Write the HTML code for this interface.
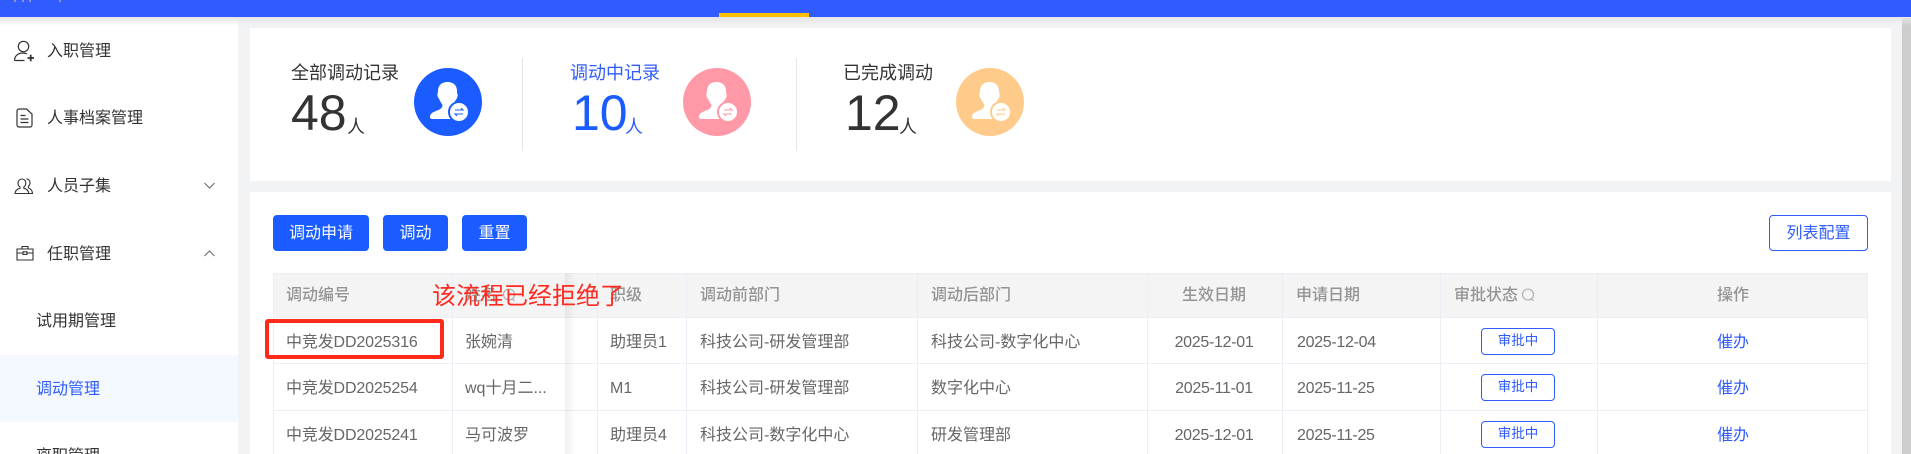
<!DOCTYPE html>
<html lang="zh-CN">
<head>
<meta charset="utf-8">
<title>调动管理</title>
<style>
html,body{margin:0;padding:0;width:1911px;height:454px;overflow:hidden;background:#f2f3f5;}
#w{position:relative;width:1911px;height:454px;overflow:hidden;background:#f2f3f5;font-family:"Liberation Sans","Noto Sans CJK SC",sans-serif;color:#333;}
.a{position:absolute;}
.t{position:absolute;white-space:nowrap;font-size:16px;line-height:24px;height:24px;}
.c{transform:translateX(-50%);}
.m{color:#333;}
.h{color:#949494;font-weight:500;}
.b{color:#666;}
.d{letter-spacing:-.3px;}
.e{letter-spacing:-.15px;}
.btn{position:absolute;top:215px;height:36px;line-height:37px;background:#1a5cff;color:#fff;text-align:center;font-size:16px;border-radius:4px;}
.tag{position:absolute;left:1481px;width:72px;height:25px;line-height:24px;border:1px solid #2f5bff;border-radius:4px;color:#2f5bff;font-size:13.5px;text-align:center;background:#fff;}
.hl{position:absolute;left:273px;width:1595px;height:1px;background:#eceef5;}
.vl{position:absolute;top:273px;height:181px;width:1px;background:#eceef5;}
.num{position:absolute;font-size:50px;line-height:56px;height:56px;white-space:nowrap;}
.ren{position:absolute;font-size:18px;line-height:24px;white-space:nowrap;}
svg{position:absolute;display:block;}
</style>
</head>
<body>
<div id="w">
<!-- main cards -->
<div class="a" style="left:250px;top:28px;width:1641px;height:153px;background:#fff;"></div>
<div class="a" style="left:250px;top:192px;width:1641px;height:262px;background:#fff;"></div>
<!-- scrollbar -->
<div class="a" style="left:1902px;top:18px;width:9px;height:436px;background:#cdcdcd;"></div>
<!-- sidebar -->
<div class="a" style="left:0;top:0;width:238px;height:454px;background:#fff;"></div>
<div class="a" style="left:0;top:355px;width:238px;height:67px;background:#f4f8ff;"></div>
<!-- top bar -->
<div class="a" style="left:0;top:17px;width:1911px;height:9px;background:linear-gradient(#e6e6e8,rgba(240,240,242,0));"></div>
<div class="a" style="left:0;top:0;width:1911px;height:17px;background:#2f5bff;"></div>
<div class="a" style="left:719px;top:13px;width:90px;height:4px;background:#ffc000;"></div>
<div class="a" style="left:14px;top:0;width:2px;height:2px;background:#8f93c9;"></div>
<div class="a" style="left:22px;top:0;width:2px;height:2px;background:#8f93c9;"></div>
<div class="a" style="left:29px;top:0;width:2px;height:2px;background:#8f93c9;"></div>
<div class="a" style="left:59px;top:0;width:2px;height:2px;background:#8f93c9;"></div>

<!-- sidebar icons -->
<svg style="left:13px;top:40px" width="22" height="22" viewBox="0 0 22 22" fill="none" stroke="#333" stroke-width="1.200">
<circle cx="10.500" cy="6.500" r="5.200"/><path d="M1.500 20.500c0-4.500 3.500-7.500 8.500-7.500 1.500 0 2.800.3 4 .9M1.500 20.500h10"/><path d="M14.500 18h6.500M17.700 14.800v6.400" stroke-width="1.800"/>
</svg>
<svg style="left:16px;top:108px" width="17" height="20" viewBox="0 0 17 20" fill="none" stroke="#333" stroke-width="1.200">
<path d="M3 1h7.500L16 6v11a2 2 0 0 1-2 2H3a2 2 0 0 1-2-2V3a2 2 0 0 1 2-2z"/><path d="M4.500 7.500h5M4.500 11h8M4.500 14.500h8"/>
</svg>
<svg style="left:14px;top:177px" width="20" height="18" viewBox="0 0 20 18" fill="none" stroke="#333" stroke-width="1.100">
<path d="M8 2c2.300 0 3.800 1.800 3.800 4 0 1.800-.8 3.200-2 4v1.200c2.800.8 4.700 2.500 5 5.300H1c.3-2.800 2.200-4.500 5-5.300V10c-1.200-.8-2-2.200-2-4 0-2.200 1.700-4 4-4z"/><path d="M12.500 1.800c2 .2 3.500 1.800 3.500 3.900 0 1.500-.6 2.700-1.600 3.500v1.700c2.500.9 3.900 2.700 4.100 5.600h-3.300"/>
</svg>
<svg style="left:16px;top:245px" width="18" height="16" viewBox="0 0 18 16" fill="none" stroke="#333" stroke-width="1.100">
<path d="M1 4h16v11H1z"/><path d="M6 4V1.500h6V4"/><path d="M1 8h6M11 8h6"/><path d="M7 6.800h4v2.600H7z"/>
</svg>
<svg style="left:204px;top:182px" width="11" height="7" viewBox="0 0 11 7" fill="none" stroke="#666" stroke-width="1"><path d="M.5 1l5 5 5-5"/></svg>
<svg style="left:204px;top:250px" width="11" height="7" viewBox="0 0 11 7" fill="none" stroke="#666" stroke-width="1"><path d="M.5 6l5-5 5 5"/></svg>

<!-- sidebar text -->
<div class="t m" style="left:47px;top:40px;">入职管理</div>
<div class="t m" style="left:47px;top:107px;">人事档案管理</div>
<div class="t m" style="left:47px;top:175px;">人员子集</div>
<div class="t m" style="left:47px;top:243px;">任职管理</div>
<div class="t m" style="left:36px;top:310px;">试用期管理</div>
<div class="t" style="left:36px;top:378px;color:#2f5bff;">调动管理</div>
<div class="t m" style="left:36px;top:445px;">离职管理</div>

<!-- stats -->
<div class="t" style="left:291px;top:61px;font-size:18px;">全部调动记录</div>
<div class="num" style="left:291px;top:85px;color:#333;">48</div>
<div class="ren" style="left:347px;top:115px;">人</div>
<svg style="left:414px;top:68px" width="68" height="68" viewBox="0 0 68 68">
<circle cx="34" cy="34" r="34" fill="#1a5cff"/>
<path fill="#fff" d="M33.500 14C27 14 24 18 24 23C24 25 23 26 23.500 28C24 30 25.500 31 26 33L28.500 37C28.500 40 26 41.500 22 43C18 44.500 16 46 16 49C16 50.500 17 51 18 51H44V38H39L41 33C43 30.500 44 28.500 43.500 26C43 25 43 24 43 23C43 18 40 14 33.500 14Z"/>
<circle cx="45" cy="44" r="11" fill="#1a5cff"/><circle cx="45" cy="44" r="9" fill="#fff"/>
<path fill="none" stroke="#1a5cff" stroke-width="1.100" d="M41 42h8l-2-1.800M49 46h-8l2 1.800"/>
</svg>

<div class="a" style="left:522px;top:58px;width:1px;height:93px;background:#e6e6e6;"></div>
<div class="t" style="left:570px;top:61px;font-size:18px;color:#2f5bff;">调动中记录</div>
<div class="num" style="left:572px;top:85px;color:#1a5cff;">10</div>
<div class="ren" style="left:625px;top:115px;color:#2f5bff;">人</div>
<svg style="left:683px;top:68px" width="68" height="68" viewBox="0 0 68 68">
<circle cx="34" cy="34" r="34" fill="#ff99a8"/>
<path fill="#fff" d="M33.500 14C27 14 24 18 24 23C24 25 23 26 23.500 28C24 30 25.500 31 26 33L28.500 37C28.500 40 26 41.500 22 43C18 44.500 16 46 16 49C16 50.500 17 51 18 51H44V38H39L41 33C43 30.500 44 28.500 43.500 26C43 25 43 24 43 23C43 18 40 14 33.500 14Z"/>
<circle cx="45" cy="44" r="11" fill="#ff99a8"/><circle cx="45" cy="44" r="9" fill="#fff"/>
<path fill="none" stroke="#ff99a8" stroke-width="1.100" d="M41 42h8l-2-1.800M49 46h-8l2 1.800"/>
</svg>

<div class="a" style="left:796px;top:58px;width:1px;height:93px;background:#e6e6e6;"></div>
<div class="t" style="left:843px;top:61px;font-size:18px;">已完成调动</div>
<div class="num" style="left:845px;top:85px;color:#333;">12</div>
<div class="ren" style="left:899px;top:115px;">人</div>
<svg style="left:956px;top:68px" width="68" height="68" viewBox="0 0 68 68">
<circle cx="34" cy="34" r="34" fill="#ffcb8a"/>
<path fill="#fff" d="M33.500 14C27 14 24 18 24 23C24 25 23 26 23.500 28C24 30 25.500 31 26 33L28.500 37C28.500 40 26 41.500 22 43C18 44.500 16 46 16 49C16 50.500 17 51 18 51H44V38H39L41 33C43 30.500 44 28.500 43.500 26C43 25 43 24 43 23C43 18 40 14 33.500 14Z"/>
<circle cx="45" cy="44" r="11" fill="#ffcb8a"/><circle cx="45" cy="44" r="9" fill="#fff"/>
<path fill="none" stroke="#ffcb8a" stroke-width="1.100" d="M41 42h8l-2-1.800M49 46h-8l2 1.800"/>
</svg>

<!-- buttons -->
<div class="btn" style="left:273px;width:96px;">调动申请</div>
<div class="btn" style="left:383px;width:65px;">调动</div>
<div class="btn" style="left:462px;width:65px;">重置</div>
<div class="a" style="left:1769px;top:215px;width:97px;height:34px;line-height:35px;border:1px solid #2f5bff;border-radius:4px;color:#2f5bff;text-align:center;font-size:16px;">列表配置</div>

<!-- table -->
<div class="a" style="left:273px;top:273px;width:1595px;height:44px;background:#f4f4f5;"></div>
<div class="hl" style="top:273px;"></div>
<div class="hl" style="top:317px;"></div>
<div class="hl" style="top:363px;"></div>
<div class="hl" style="top:410px;"></div>
<div class="vl" style="left:273px;"></div>
<div class="vl" style="left:452px;"></div>
<div class="vl" style="left:597px;"></div>
<div class="vl" style="left:686px;"></div>
<div class="vl" style="left:917px;"></div>
<div class="vl" style="left:1147px;"></div>
<div class="vl" style="left:1282px;"></div>
<div class="vl" style="left:1440px;"></div>
<div class="vl" style="left:1597px;"></div>
<div class="vl" style="left:1867px;"></div>
<!-- fixed column shadow -->
<div class="a" style="left:565px;top:273px;width:11px;height:181px;background:linear-gradient(to right,rgba(0,0,0,.06),rgba(0,0,0,0));"></div>

<!-- header text -->
<div class="t h" style="left:286px;top:284px;">调动编号</div>
<div class="t h" style="left:465px;top:284px;">姓名</div>
<svg style="left:502px;top:288px" width="15" height="14" viewBox="0 0 15 14" fill="none" stroke="#aaa" stroke-width="1.100"><circle cx="7" cy="6.500" r="5.500"/><path d="M10.500 11l2 2"/></svg>
<div class="t h" style="left:610px;top:284px;">职级</div>
<div class="t h" style="left:700px;top:284px;">调动前部门</div>
<div class="t h" style="left:931px;top:284px;">调动后部门</div>
<div class="t h c" style="left:1214px;top:284px;">生效日期</div>
<div class="t h" style="left:1296px;top:284px;">申请日期</div>
<div class="t h" style="left:1454px;top:284px;">审批状态</div>
<svg style="left:1521px;top:288px" width="15" height="14" viewBox="0 0 15 14" fill="none" stroke="#aaa" stroke-width="1.100"><circle cx="7" cy="6.500" r="5.500"/><path d="M10.500 11l2 2"/></svg>
<div class="t h c" style="left:1733px;top:284px;">操作</div>

<!-- row 1 -->
<div class="t b e" style="left:286px;top:331px;">中竞发DD2025316</div>
<div class="t b" style="left:465px;top:331px;">张婉清</div>
<div class="t b" style="left:610px;top:331px;">助理员1</div>
<div class="t b" style="left:700px;top:331px;">科技公司-研发管理部</div>
<div class="t b" style="left:931px;top:331px;">科技公司-数字化中心</div>
<div class="t b c d" style="left:1214px;top:331px;">2025-12-01</div>
<div class="t b d" style="left:1297px;top:331px;">2025-12-04</div>
<div class="tag" style="top:328px;">审批中</div>
<div class="t c" style="left:1733px;top:331px;color:#2f5bff;">催办</div>
<!-- row 2 -->
<div class="t b e" style="left:286px;top:377px;">中竞发DD2025254</div>
<div class="t b" style="left:465px;top:377px;">wq十月二...</div>
<div class="t b" style="left:610px;top:377px;">M1</div>
<div class="t b" style="left:700px;top:377px;">科技公司-研发管理部</div>
<div class="t b" style="left:931px;top:377px;">数字化中心</div>
<div class="t b c d" style="left:1214px;top:377px;">2025-11-01</div>
<div class="t b d" style="left:1297px;top:377px;">2025-11-25</div>
<div class="tag" style="top:374px;">审批中</div>
<div class="t c" style="left:1733px;top:377px;color:#2f5bff;">催办</div>
<!-- row 3 -->
<div class="t b e" style="left:286px;top:424px;">中竞发DD2025241</div>
<div class="t b" style="left:465px;top:424px;">马可波罗</div>
<div class="t b" style="left:610px;top:424px;">助理员4</div>
<div class="t b" style="left:700px;top:424px;">科技公司-数字化中心</div>
<div class="t b" style="left:931px;top:424px;">研发管理部</div>
<div class="t b c d" style="left:1214px;top:424px;">2025-12-01</div>
<div class="t b d" style="left:1297px;top:424px;">2025-11-25</div>
<div class="tag" style="top:421px;">审批中</div>
<div class="t c" style="left:1733px;top:424px;color:#2f5bff;">催办</div>

<!-- annotation -->
<div class="a" style="left:265px;top:319px;width:171px;height:32px;border:4px solid #ff2a1a;border-radius:3px;"></div>
<div class="t" style="left:432px;top:281px;font-size:24px;line-height:32px;height:32px;color:#ff2a20;">该流程已经拒绝了</div>
</div>
</body>
</html>
